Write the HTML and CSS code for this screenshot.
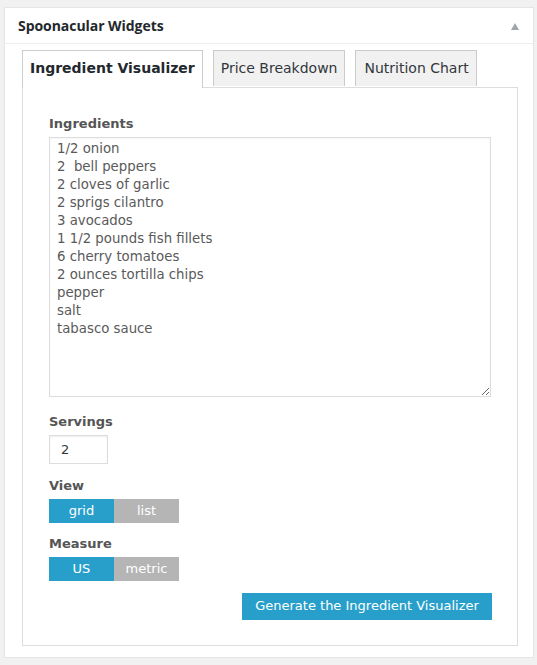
FILE: index.html
```html
<!DOCTYPE html>
<html>
<head>
<meta charset="utf-8">
<link rel="stylesheet" href="styles.css">
</head>
<body>
<div class="card">
  <div class="card-head">
    <h2 class="card-title">Spoonacular Widgets</h2>
    <span class="toggle"></span>
  </div>
  <div class="card-body">
    <div class="tabs">
      <div class="tab active">Ingredient Visualizer</div>
      <div class="tab">Price Breakdown</div>
      <div class="tab">Nutrition Chart</div>
    </div>
    <div class="panel">
      <div class="label first">Ingredients</div>
      <textarea class="ingredients">1/2 onion
2  bell peppers
2 cloves of garlic
2 sprigs cilantro
3 avocados
1 1/2 pounds fish fillets
6 cherry tomatoes
2 ounces tortilla chips
pepper
salt
tabasco sauce</textarea>
      <div class="label">Servings</div>
      <input class="servings" type="text" value="2">
      <div class="label">View</div>
      <div class="toggle-group">
        <span class="opt on">grid</span><span class="opt">list</span>
      </div>
      <div class="label after-group">Measure</div>
      <div class="toggle-group">
        <span class="opt on">US</span><span class="opt">metric</span>
      </div>
      <div class="actions">
        <span class="btn">Generate the Ingredient Visualizer</span>
      </div>
    </div>
  </div>
</div>
</body>
</html>
```
FILE: styles.css
```css
html, body {
  margin: 0;
  padding: 0;
  background: #f1f1f1;
}
body {
  padding: 7px 3px 0 4px;
  font-family: "DejaVu Sans", Verdana, sans-serif;
}
.card {
  background: #fff;
  border: 1px solid #e5e5e5;
  box-shadow: 0 1px 1px rgba(0,0,0,0.04);
  height: 651px;
  box-sizing: border-box;
}
.card-head {
  height: 35px;
  border-bottom: 1px solid #eee;
  display: flex;
  align-items: center;
  justify-content: space-between;
  padding: 0 14px 0 13px;
}
.card-title {
  margin: 0;
  font-family: "Open Sans", sans-serif;
  font-weight: 700;
  font-size: 14px;
  color: #23282d;
  letter-spacing: -0.05px;
}
.toggle {
  width: 0;
  height: 0;
  border-left: 4px solid transparent;
  border-right: 4px solid transparent;
  border-bottom: 7px solid #a0a5aa;
  margin-top: 1px;
}
.card-body {
  padding: 6px 15px 0 17px;
}
.tabs {
  display: flex;
  gap: 10px;
  position: relative;
  z-index: 1;
}
.tab {
  height: 36px;
  box-sizing: border-box;
  border: 1px solid #ccc;
  border-bottom: none;
  background: #f1f1f1;
  color: #32373c;
  font-size: 14px;
  line-height: 35px;
  padding: 0 7px 0 8px;
  margin-bottom: -1px;
}
.tab.active {
  background: #fff;
  height: 38px;
  font-weight: 700;
  color: #23282d;
  padding: 0 7px 0 7px;
}
.tab:nth-child(2) { padding: 0 7px; }
.panel {
  border: 1px solid #ddd;
  height: 559px;
  box-sizing: border-box;
  padding: 27px 26px 0 26px;
  display: flex;
  flex-direction: column;
  align-items: flex-start;
}
.label {
  font-size: 13px;
  font-weight: 700;
  color: #555;
  line-height: 18px;
  margin-top: 16px;
  margin-bottom: 4px;
}
.label.first { margin-top: 0; }
.label.after-group { margin-top: 12px; }
.ingredients {
  width: 442px;
  height: 260px;
  box-sizing: border-box;
  border: 1px solid #ddd;
  box-shadow: inset 0 1px 2px rgba(0,0,0,0.04);
  font-family: "DejaVu Sans", Verdana, sans-serif;
  font-size: 13.3px;
  line-height: 18px;
  color: #5a5a5a;
  padding: 2px 7px;
  margin: 0;
  resize: both;
  outline: none;
}
.servings {
  width: 59px;
  height: 29px;
  box-sizing: border-box;
  border: 1px solid #ddd;
  box-shadow: inset 0 1px 2px rgba(0,0,0,0.07);
  font-family: "DejaVu Sans", Verdana, sans-serif;
  font-size: 13px;
  color: #32373c;
  padding: 0 11px;
  margin: 0 0 -3px 0;
}
.toggle-group {
  display: flex;
}
.opt {
  width: 65px;
  height: 24px;
  line-height: 24px;
  text-align: center;
  font-size: 13px;
  color: #fff;
  background: #b5b5b5;
}
.opt.on { background: #289fcb; }
.actions {
  align-self: stretch;
  display: flex;
  justify-content: flex-end;
  margin-top: 12px;
}
.btn {
  display: block;
  height: 27px;
  line-height: 26px;
  width: 250px;
  text-align: center;
  background: #289fcb;
  color: #fff;
  font-size: 13px;
  margin-right: -1px;
}
```
